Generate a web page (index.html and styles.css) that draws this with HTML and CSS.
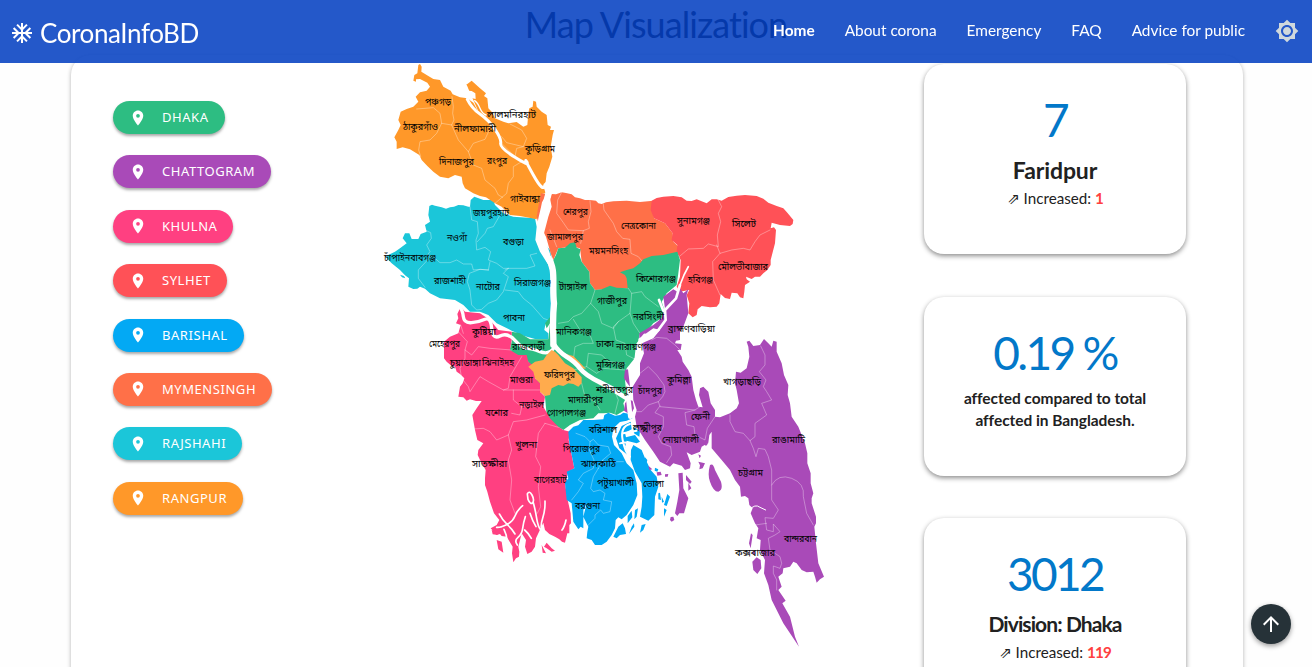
FILE: index.html
```html
<!DOCTYPE html>
<html lang="en">
<head>
<meta charset="utf-8">
<title>CoronaInfoBD</title>
<link rel="stylesheet" href="styles.css">
</head>
<body>
<header class="navbar">
  <a class="brand"><svg class="brand-icon" viewBox="0 0 24 24"><path d="M22 11h-4.17l3.24-3.24-1.41-1.42L15 11h-2V9l4.66-4.66-1.42-1.41L13 6.17V2h-2v4.17L7.76 2.93 6.34 4.34 11 9v2H9L4.34 6.34 2.93 7.76 6.17 11H2v2h4.17l-3.24 3.24 1.41 1.42L9 13h2v2l-4.66 4.66 1.42 1.41L11 17.83V22h2v-4.17l3.24 3.24 1.42-1.41L13 15v-2h2l4.66 4.66 1.41-1.42L17.83 13H22z"/></svg><span class="brand-name">CoronaInfoBD</span></a>
  <nav class="links"><a class="active">Home</a><a>About corona</a><a>Emergency</a><a>FAQ</a><a>Advice for public</a></nav>
  <svg class="theme" viewBox="0 0 24 24"><path d="M20 8.69V4h-4.69L12 .69 8.69 4H4v4.69L.69 12 4 15.31V20h4.69L12 23.31 15.31 20H20v-4.69L23.31 12 20 8.69zM12 18c-3.31 0-6-2.69-6-6s2.69-6 6-6 6 2.69 6 6-2.69 6-6 6zm0-10c-2.21 0-4 1.79-4 4s1.79 4 4 4 4-1.79 4-4-1.79-4-4-4z"/></svg>
</header>
<svg class="defs"><symbol id="pin" viewBox="0 0 24 24"><path d="M12 2C8.13 2 5 5.13 5 9c0 5.25 7 13 7 13s7-7.75 7-13c0-3.87-3.13-7-7-7zm0 9.5a2.5 2.5 0 0 1 0-5 2.5 2.5 0 0 1 0 5z"/></symbol></svg>
<main>
<h1 class="title"><span>Map Visualization</span></h1>
<section class="panel">
  <div class="divisions">
    <button class="pill dhaka"><svg><use href="#pin"/></svg>DHAKA</button>
    <button class="pill chattogram"><svg><use href="#pin"/></svg>CHATTOGRAM</button>
    <button class="pill khulna"><svg><use href="#pin"/></svg>KHULNA</button>
    <button class="pill sylhet"><svg><use href="#pin"/></svg>SYLHET</button>
    <button class="pill barishal"><svg><use href="#pin"/></svg>BARISHAL</button>
    <button class="pill mymensingh"><svg><use href="#pin"/></svg>MYMENSINGH</button>
    <button class="pill rajshahi"><svg><use href="#pin"/></svg>RAJSHAHI</button>
    <button class="pill rangpur"><svg><use href="#pin"/></svg>RANGPUR</button>
  </div>
  <svg class="map" viewBox="380 60 450 600">
  <g transform="translate(380 60) scale(.33333)">
    <!-- Rajshahi -->
    <g transform="translate(0 390)">
      <path class="f-raj" d="M148 48L156 44 165 47 185 52 198 56 210 52 222 50 235 45 250 46 265 50 270 50 272 30 283 20 300 26 310 30 340 30 345 45 370 70 400 80 465 85 470 110 466 150 480 185 505 225 520 260 515 300 520 340 512 390 497 400 493 420 505 430 505 448 465 447 430 437 395 422 350 400 325 375 300 365 270 365 250 345 225 330 200 327 180 325 150 310 135 296 120 290 112 296 100 297 85 290 87 265 75 256 60 240 48 230 35 220 20 205 20 197 45 185 60 175 80 160 68 145 75 130 88 130 95 147 115 147 122 132 140 125 135 105 150 95 145 75ZM497 165L510 180 515 205 505 205ZM60 254L72 258 76 265 66 262Z"/>
      <path class="b" d="M135 120L152 128 154 145 140 165 150 185 142 195 165 205 180 218 210 218 230 210 250 222 275 222 280 240 300 238 325 240M150 202L115 240 115 265 135 292M270 50L275 90 292 95 295 130 288 150 290 180 315 172 332 185 325 210 350 220 370 235 440 235 465 228 450 195 470 190M360 75L340 110 322 115 315 130 292 155M325 240L330 215M325 240L300 238 268 250 262 275 270 300 275 345 290 360 305 358 325 340 350 330 370 305 385 260 370 250 385 235M375 300L415 305 430 325 455 345 490 385 510 392M385 235L375 240"/>
    </g>
    <!-- Rangpur -->
    <path class="f-ran" d="M120 12L125 20 124 35 140 45 160 57 180 60 190 80 212 92 218 103 240 112 262 115 280 128 300 165 260 75 258 75 275 62 300 85 318 100 312 108 322 115 325 145 335 155 345 175 370 185 385 190 410 186 430 200 442 195 445 160 448 145 458 140 460 122 468 125 470 140 485 155 500 165 503 195 513 200 510 210 522 210 518 225 512 260 517 290 508 320 500 340 497 365 490 378 497 400 485 402 478 440 470 478 440 472 420 468 390 465 365 440 345 430 318 412 300 408 280 400 255 385 248 370 245 350 225 345 205 355 180 350 160 335 142 318 125 300 118 285 90 268 68 262 50 267 50 245 43 232 55 210 62 195 55 180 62 155 80 147 100 140 115 125 107 110 120 97 140 92 150 80 142 68 120 57 108 58 108 65 100 62 103 45 112 40 115 15Z"/>
    <path fill="#fff" d="M263 112L250 65 262 80 262 92 275 93 286 100 287 117Z"/>
    <path class="b" d="M110 147L160 143 180 160 185 190 215 195 222 180 218 160 220 140 216 110M185 190L170 220 150 240 120 245 116 270 122 290M215 195L235 240 265 275 280 315 305 325 315 360 345 385 355 405 368 412M265 275L280 250 315 238 328 210 330 190M365 230L380 248 430 260 440 235 425 210 390 192M430 260L410 265 405 290 425 305 400 320 400 350 385 370 380 400 345 430M262 118L300 165 348 205 365 250 400 285"/>
    <path class="r" stroke-width="9" d="M262 118Q275 145 300 162T345 208 362 250 405 292 440 305 460 345 495 374"/>
    <path class="r" stroke-width="4" d="M284 122Q293 128 300 145T318 165"/>
    <!-- Mymensingh and Sylhet -->
    <g transform="translate(450 360)">
      <path class="f-mym" d="M60 55L65 42 78 43 95 37 108 39 125 43 135 52 150 55 165 60 180 60 198 62 205 70 215 72 228 67 250 64 290 62 330 66 370 62 372 115 405 130 428 160 430 185 446 200 442 218 400 235 340 248 300 285 303 325 240 327 195 330 180 310 178 275 155 245 150 205 130 200 85 205 70 240 62 220 48 170 42 160 55 110 65 80ZM33 40L45 42 42 80 30 110 28 140 20 110 25 80Z"/>
      <path class="f-syl" d="M365 62L380 54 400 50 430 48 455 52 470 62 485 63 500 58 530 70 545 58 560 58 575 62 595 51 620 47 645 45 680 48 700 56 715 68 740 78 760 85 772 98 790 120 788 132 780 138 750 135 725 128 722 145 732 142 738 150 735 190 722 240 722 255 712 270 700 280 690 290 675 290 665 297 648 290 650 298 660 305 645 315 643 335 640 355 630 352 622 340 605 338 600 357 585 354 572 342 568 370 560 380 540 382 515 378 503 388 500 405 488 412 475 400 478 370 470 345 478 330 450 335 440 320 450 290 452 240 440 215 442 195 425 180 428 160 405 130 372 115 362 90Z"/>
      <path class="b" d="M95 37L83 60 80 100 100 128 115 150 160 152 178 145 175 125 183 95 180 62M160 152L152 190M220 72L222 90 250 130 260 155 278 175 300 178 303 220 325 230 335 242M60 150L80 200M565 60L575 80 565 100 572 125 562 165 565 200 535 192 520 205 475 207 445 232M560 195L570 220 605 210 640 205 660 210 675 185 690 165 720 150M570 220L548 245 550 300 570 345"/>
      <!-- Dhaka -->
      <path class="f-dha" d="M70 240L78 225 85 205 105 203 120 190 135 187 140 203 152 208 148 225 155 245 178 275 180 310 195 330 215 328 240 317 260 323 293 325 290 295 285 285 270 277 290 270 310 265 330 250 340 238 365 228 400 225 442 215 450 240 445 280 440 315 410 340 395 365 403 390 395 415 370 430 350 455 330 460 325 480 330 510 310 540 290 565 285 600 290 650 280 670 285 690 260 705 240 698 220 700 205 700 190 715 170 717 150 720 120 735 100 750 75 735 50 705 45 650 0 560 -5 545 -40 530 -62 515 -55 485 -55 455 -30 460 0 478 55 478 60 430 50 445 45 430 65 405Z"/>
      <path class="b" d="M195 330L182 370 155 400 130 410 115 425 85 430M130 418L150 450 180 465 190 490 160 490 135 500 130 540M182 370L205 395 215 430 250 445 265 425 300 400 305 340 295 325M305 340L335 335 345 350 385 380M300 400L310 430 330 460M265 425L250 440 258 480 285 490 290 525 320 540M170 560L175 520 215 525 235 545 285 550M130 570L170 560 200 580 220 565 285 570M155 610L165 650 195 665 210 690M210 600L250 625 265 660 255 700"/>
    </g>
    <!-- Khulna -->
    <g transform="translate(150 720)">
      <path class="f-khu" d="M92 20L105 35 150 40 180 60 205 90 245 95 245 120 240 150 265 165 290 165 295 185 320 205 315 235 330 250 330 275 345 290 340 320 360 355 385 380 400 390 420 395 416 420 418 430 425 465 433 505 415 515 405 550 413 600 422 640 423 670 418 675 418 700 412 700 405 728 396 725 388 718 375 710 358 702 345 690 340 668 325 700 318 715 315 740 305 755 292 762 285 740 288 720 275 700 265 740 268 755 267 770 258 775 250 787 246 760 248 740 230 710 215 708 210 702 200 705 182 685 200 675 208 660 192 640 180 605 172 575 165 555 165 535 167 510 150 480 143 465 145 450 160 430 142 420 135 390 127 345 140 325 155 303 138 303 120 298 110 302 100 292 85 290 90 260 98 250 103 235 90 222 80 215 75 200 65 198 50 185 42 175 42 125 60 110 85 100 92 75 78 70 85 55 82 42Z"/>
      <path class="f-khu" d="M200 720L215 725 220 758 205 748ZM342 740L350 728 365 745 375 752 365 755 350 745ZM335 735L348 760 338 758ZM185 690L200 694 203 705 188 703Z"/>
      <path class="b" d="M85 95L112 125 105 150 125 165 145 140 180 145 245 150M92 75L100 100M105 150L105 175 90 205 95 235 115 260 120 275 150 230 175 245 220 270 235 265 240 230 275 170M220 270L250 270 330 270M250 270L250 300 275 320 270 345 245 340M130 387L160 385 180 395 200 420 235 405 250 365 290 360 345 345M235 405L245 450 235 480 245 540 240 600 255 640M345 370L325 400 317 470 332 500 325 560 332 620 322 640M275 320L340 310M345 370L385 382"/>
      <path class="r" stroke-width="10" d="M86 15Q98 30 100 50T125 68 165 58 185 85 210 108 255 121 290 145 330 155 372 143"/>
      <path class="r" stroke-width="5" d="M292 582Q298 570 306 585T308 608 294 598ZM310 608Q316 630 320 655T332 690 340 720M345 603Q346 630 338 655T336 690M278 617Q262 630 255 648T228 675 200 682M208 642Q218 662 232 674T255 702M286 650Q280 668 278 685T264 712 262 735M222 688Q232 708 230 725M284 690Q296 700 304 715M300 640Q308 665 318 680M408 660Q404 680 396 690"/>
    </g>
    <!-- Barishal -->
    <g transform="translate(180 1020)">
      <path class="f-bar" d="M385 95L400 80 415 76 430 60 460 60 490 58 493 45 505 38 525 47 540 45 550 38 570 42 577 55 560 62 540 66 520 85 516 110 522 135 545 160 560 190 580 210 590 250 592 285 580 315 560 345 545 358 535 352 527 360 525 385 515 405 500 425 485 435 465 435 455 420 440 415 442 395 445 380 430 350 440 310 430 330 430 385 422 380 415 388 400 365 395 310 380 300 375 250 385 235 380 215 403 205 395 165 388 130ZM573 150L580 135 605 150 615 175 632 210 650 230 655 260 645 290 643 345 625 362 600 350 605 320 607 290 605 250 585 215 572 180ZM545 78L572 65 575 88 555 98 558 112 585 105 600 125 590 130 560 122 555 140 563 165 538 145 528 115ZM580 82L600 92 598 110 582 100ZM615 172L622 180 620 188 613 185ZM645 203L655 208 652 215 644 212ZM520 410L535 380 548 370 555 385 558 402 540 405 530 415ZM563 348L575 332 577 352 563 370ZM585 330L594 325 590 350 583 358ZM605 375L617 372 610 390 600 398ZM575 380L582 370 583 380 567 402ZM655 280L660 278 663 300 655 298ZM682 282L690 290 680 318 672 315ZM672 325L680 330 672 350ZM665 290L672 305 666 308Z"/>
      <path class="b" d="M408 100L435 110 450 125 460 118 475 135 505 140 512 160 488 180 490 185 550 185M450 125L448 150 462 180 460 205 430 220 415 240 430 250 415 275 395 300M475 205L460 230 452 265 460 275 480 270 495 280 490 300 515 305 510 335 490 340 482 330 465 345 465 355 440 380M488 180L475 205"/>
      <path class="r" stroke-width="6" d="M570 72Q540 80 548 120T570 170M550 100L590 92M540 130Q565 122 570 138"/>
    </g>
    <path class="f-far" transform="translate(150 720)" d="M375 155L365 150 350 165 340 180 315 185 295 200 310 215 315 235 330 250 330 275 345 288 360 285 365 265 385 255 400 258 415 250 430 252 445 260 455 250 455 232 430 205 405 190 385 165ZM400 160L430 168 468 207 440 200Z"/>
    <!-- Chattogram -->
    <g transform="translate(720 780)">
      <path class="f-cha" d="M130 -70L160 -92 172 -85 180 -95 190 -80 205 -92 200 -75 205 -20 190 20 180 35 180 60 168 62 165 70 185 72 182 90 172 90 185 110 188 125 205 150 215 170 220 210 228 240 235 260 248 262 237 225 240 205 250 200 265 215 272 250 285 270 285 290 300 292 330 280 350 265 357 250 350 210 345 190 348 155 362 158 380 145 388 110 385 80 380 65 388 62 400 78 420 75 432 57 445 70 455 80 460 62 470 65 470 95 485 130 492 165 505 195 503 225 510 250 515 290 535 320 545 345 555 370 562 400 562 430 572 460 572 490 580 520 575 535 575 550 588 590 588 610 583 620 588 670 595 730 612 770 600 778 590 788 585 770 580 755 560 757 545 750 530 730 520 725 510 740 490 745 488 760 475 770 485 800 475 810 497 842 487 850 510 890 525 950 537 980 520 955 490 910 455 840 445 795 432 760 435 720 420 690 422 660 410 655 415 625 405 610 392 580 398 565 388 555 385 535 375 528 363 530 360 500 345 480 330 450 305 420 275 385 275 335 268 345 265 368 245 380 240 395 215 405 200 397 205 410 212 430 210 445 195 450 185 437 160 430 150 440 120 425 100 395 75 360 50 320 45 290 50 270 40 240 38 200 60 165 60 130 72 100 66 70 100 55 120 30 100 25 58 55 58 40 100 15 125 -5 135 -35ZM15 150L24 148 30 200 22 190 12 175ZM25 237L38 243 42 265 32 285 12 272 15 250Z"/>
      <path class="f-cha" d="M270 435Q280 428 285 450L303 485Q310 510 295 515Q280 515 270 485Q262 465 270 435ZM175 460L188 458 190 505 205 535 192 580 178 580 172 588 165 580 172 545 178 510ZM198 465L215 485 210 492 198 480ZM205 488L214 505 205 512ZM85 437L97 448 88 450ZM110 457L122 455 125 465 112 467ZM135 463L145 462 143 470 135 470ZM152 591L160 590 163 600 155 605 150 600ZM235 425L255 430 248 445 238 448 240 436ZM235 403L243 407 239 415ZM250 370L265 370 258 378ZM393 640L398 645 392 685 387 670ZM410 712L422 720 424 745 412 762 400 750 397 725ZM398 690L407 700 400 705Z"/>
      <path class="b" d="M95 60L110 52 140 55 165 75 180 90M45 275L65 275 85 255 115 245 128 230 135 215 132 195 110 165 85 140 60 160M115 245L120 260 225 270 240 260M120 258L105 278 130 290 130 320 115 350 125 370 152 380 155 405 140 428M225 270L195 278 200 315 222 320 225 345 255 360 262 325 285 290M422 78L435 105 435 135 418 155 438 180 430 200 440 215 455 240 425 250 440 285 405 310 405 350 390 362 370 340 345 335 330 305 330 285M390 362L400 385 408 410 415 385 435 388 445 410 455 450 455 540 475 570 460 595 435 593 440 630 460 635 460 612 480 635 465 645 445 655 450 690 480 710 485 730 480 745 460 738 460 760 470 780 470 810M455 495Q475 460 515 475T550 530L560 580 580 615M405 615L440 610"/>
      <path class="r" stroke-width="3" d="M388 570Q405 550 420 562L437 570"/>
      <path class="r" stroke-width="8" d="M180 -105L168 -65 135 -30 137 0 115 30 90 45 60 60M117 -60L130 -28"/>
      <path class="r" stroke-width="5" d="M205 -160L192 -135 180 -105"/>
      <path class="r" stroke-width="14" d="M75 48L55 75 50 120 35 150"/>
    </g>
    <!-- Jamuna and Padma -->
    <path class="r" stroke-width="19" d="M506 372Q510 405 495 430C488 470 476 490 484 525Q490 555 503 590C530 630 515 670 522 730C516 790 521 820 520 855"/>
    <path class="r" stroke-width="14" d="M520 850Q535 875 560 890T600 925 660 967 700 988 745 1018L751 1070"/>
  </g>
  <g class="labels" id="labels"></g>
  </svg>
  <div class="cards">
    <article class="card"><div class="num">7</div><h2>Faridpur</h2><p class="inc">⇗ Increased: <b>1</b></p></article>
    <article class="card ratio"><div class="num">0.19 %</div><p class="note">affected compared to total<br>affected in Bangladesh.</p></article>
    <article class="card"><div class="num">3012</div><h2 class="div">Division: Dhaka</h2><p class="inc">⇗ Increased: <b>119</b></p></article>
  </div>
</section>
</main>
<a class="totop"><svg viewBox="0 0 24 24"><path d="M4 12l1.41 1.41L11 7.83V20h2V7.83l5.58 5.59L20 12l-8-8-8 8z"/></svg></a>
<script src="labels.js"></script>
</body>
</html>
```
FILE: labels.js
```js
// District labels: left edge, baseline, width, name
const districts = [
  [425,105,26,'পঞ্চগড়'],[403,130,35,'ঠাকুরগাঁও'],[454,132,42,'নীলফামারী'],[487,118,49,'লালমনিরহাট'],[439,165,35,'দিনাজপুর'],[487,164,20,'রংপুর'],[525,152,30,'কুড়িগ্রাম'],[510,202,30,'গাইবান্ধা'],
  [473,216,36,'জয়পুরহাট'],[447,241,20,'নওগাঁ'],[503,245,21,'বগুড়া'],[384,261,52,'চাঁপাইনবাবগঞ্জ'],[434,284,32,'রাজশাহী'],[476,290,24,'নাটোর'],[514,286,37,'সিরাজগঞ্জ'],[503,321,22,'পাবনা'],
  [563,215,25,'শেরপুর'],[547,240,36,'জামালপুর'],[589,254,39,'ময়মনসিংহ'],[621,229,35,'নেত্রকোনা'],[677,224,33,'সুনামগঞ্জ'],[732,227,24,'সিলেট'],[718,270,50,'মৌলভীবাজার'],[688,283,25,'হবিগঞ্জ'],
  [559,290,28,'টাঙ্গাইল'],[636,282,40,'কিশোরগঞ্জ'],[597,304,30,'গাজীপুর'],[633,320,31,'নরসিংদী'],[668,332,47,'ব্রাহ্মণবাড়িয়া'],[556,335,36,'মানিকগঞ্জ'],[596,347,18,'ঢাকা'],[616,350,40,'নারায়ণগঞ্জ'],[512,350,33,'রাজবাড়ী'],[596,368,29,'মুন্সিগঞ্জ'],[596,393,37,'শরীয়তপুর'],[544,378,31,'ফরিদপুর'],[568,403,35,'মাদারীপুর'],[547,416,39,'গোপালগঞ্জ'],
  [472,335,24,'কুষ্টিয়া'],[429,347,31,'মেহেরপুর'],[450,366,31,'চুয়াডাঙ্গা'],[482,366,32,'ঝিনাইদহ'],[510,383,23,'মাগুরা'],[519,408,25,'নড়াইল'],[485,416,23,'যশোর'],[515,448,22,'খুলনা'],[472,467,35,'সাতক্ষীরা'],[534,483,33,'বাগেরহাট'],
  [589,433,28,'বরিশাল'],[563,452,37,'পিরোজপুর'],[581,467,35,'ঝালকাঠি'],[597,486,37,'পটুয়াখালী'],[643,487,21,'ভোলা'],[575,509,25,'বরগুনা'],
  [633,431,29,'লক্ষ্মীপুর'],[662,443,37,'নোয়াখালী'],[667,383,24,'কুমিল্লা'],[638,394,24,'চাঁদপুর'],[691,420,19,'ফেনী'],[723,385,38,'খাগড়াছড়ি'],[772,443,33,'রাঙামাটি'],[738,476,25,'চট্টগ্রাম'],[784,542,33,'বান্দরবান'],[735,556,40,'কক্সবাজার']
];
const layer = document.getElementById('labels');
for (const [x, y, width, name] of districts) {
  const t = document.createElementNS('http://www.w3.org/2000/svg', 'text');
  t.setAttribute('x', x);
  t.setAttribute('y', y);
  t.setAttribute('textLength', width);
  t.setAttribute('lengthAdjust', 'spacingAndGlyphs');
  t.textContent = name;
  layer.append(t);
}
```
FILE: styles.css
```css
* { box-sizing: border-box; }
body { margin: 0; height: 667px; overflow: hidden; background: #fefefe; font-family: Lato, "Noto Sans", "DejaVu Sans", sans-serif; color: #212121; }
.defs { display: none; }
.navbar { position: fixed; inset: 0 0 auto 0; z-index: 5; height: 63px; display: flex; align-items: center; padding: 0 13px 1px 10px; background: rgba(6,65,194,.88); color: #fff; }
.brand { display: flex; align-items: center; gap: 6px; margin-top: 3px; }
.brand-icon { width: 24px; height: 24px; fill: #fff; }
.brand-name { font-size: 26px; line-height: 32px; letter-spacing: -.4px; }
.links { margin: -2px 0 0 auto; display: flex; gap: 30px; font-size: 15.4px; line-height: 20px; white-space: nowrap; }
.links .active { font-weight: bold; }
.theme { width: 24px; height: 24px; margin-left: 30px; fill: #cfd8dc; }
.title { margin: 0; height: 55px; padding-top: 2px; text-align: center; font-size: 36px; line-height: 44px; font-weight: 400; letter-spacing: -.95px; color: #000; }
.panel { width: 1172px; height: 720px; margin: 0 auto 0 71px; padding: 9px 57px 0 42px; display: flex; border-radius: 20px; background: #fff; box-shadow: 0 1px 4px rgba(0,0,0,.3); }
.divisions { width: 267px; padding-top: 37px; display: flex; flex-direction: column; align-items: flex-start; gap: 21.4px; }
.pill { height: 33px; padding: 0 16px; display: flex; align-items: center; gap: 15px; border: 0; border-radius: 17px; color: #fff; font: 400 13px/33px "Noto Sans", sans-serif; letter-spacing: .55px; box-shadow: 0 2px 3px rgba(0,0,0,.35); }
.pill svg { width: 18px; height: 18px; fill: #fff; }
.dhaka { background: #2dbd82; } .chattogram { background: #a94ab8; } .khulna { background: #ff4081; } .sylhet { background: #ff5157; }
.barishal { background: #03a9f4; } .mymensingh { background: #ff7048; } .rajshahi { background: #1bc6d9; } .rangpur { background: #ff9829; }
.map { flex: none; width: 450px; height: 600px; margin-top: -4px; }
.f-ran { fill: #ff9829; } .f-raj { fill: #1bc6d9; } .f-mym { fill: #ff7048; } .f-syl { fill: #ff5157; } .f-dha { fill: #2dbd82; }
.f-khu { fill: #ff4081; } .f-bar { fill: #03a9f4; } .f-cha { fill: #a94ab8; } .f-far { fill: #ffab4d; }
.map path { stroke-linejoin: round; stroke-linecap: round; }
.map .b { fill: none; stroke: #fff; stroke-opacity: .5; stroke-width: 2; }
.map .r { fill: none; stroke: #fff; }
.labels text { font: 10px "Noto Sans Bengali", "Noto Sans", sans-serif; fill: #000; }
.cards { width: 262px; margin-left: auto; display: flex; flex-direction: column; gap: 42px; }
.card { flex: none; height: 190px; padding-top: 32px; border-radius: 20px; background: #fff; text-align: center; box-shadow: 0 2px 5px rgba(0,0,0,.45); }
.ratio { height: 179px; margin-top: 1px; }
.num { font-size: 46px; line-height: 48px; letter-spacing: -2.7px; color: #0278c9; }
.card h2 { margin: 10px 0 0; font-size: 23px; line-height: 32px; letter-spacing: -.1px; }
.card h2.div { font-size: 21px; letter-spacing: -.9px; }
.inc { margin: 1px 0 0; font-size: 15.2px; line-height: 22px; }
.inc b { color: #ff4040; letter-spacing: -.8px; }
.note { margin: 10px 0 0; font-size: 15.5px; line-height: 22px; font-weight: bold; letter-spacing: -.05px; }
.totop { position: fixed; right: 21px; bottom: 23px; width: 40px; height: 40px; border-radius: 50%; background: #263238; display: grid; place-items: center; box-shadow: 0 2px 5px rgba(0,0,0,.4); }
.totop svg { width: 24px; height: 24px; fill: #fff; }
```
